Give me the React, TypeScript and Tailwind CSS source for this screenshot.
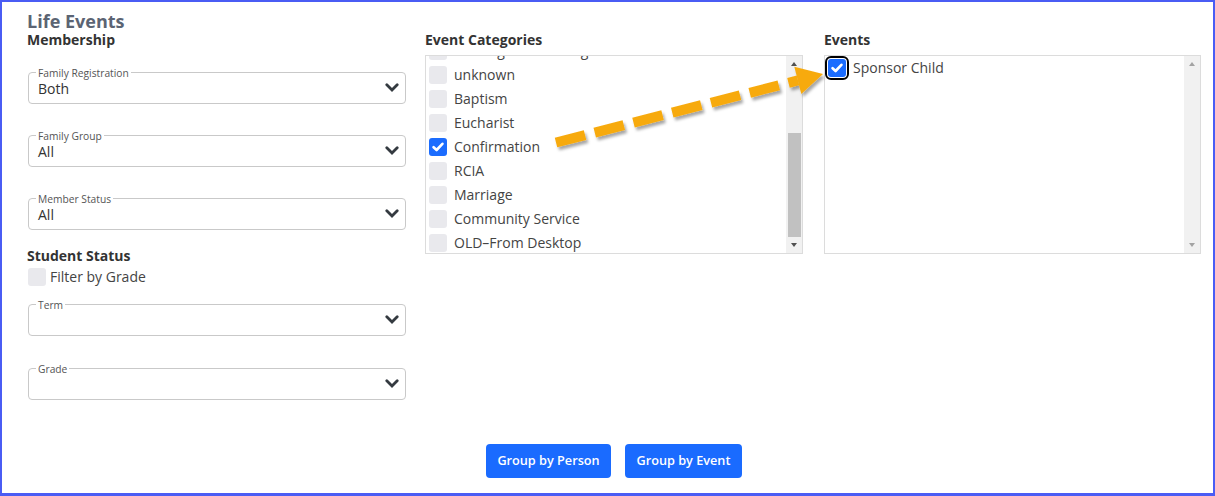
import React from "react";

function Chevron() {
  return (
    <svg width="14" height="9" viewBox="0 0 14 9" className="-mt-[3px] shrink-0">
      <polyline points="1.8,1.8 7,7 12.2,1.8" fill="none" stroke="#343a40" strokeWidth="2.8" strokeLinecap="round" strokeLinejoin="miter" />
    </svg>
  );
}

function Select({ label, value, className }: { label: string; value?: string; className: string }) {
  return (
    <fieldset className={`ml-[1px] rounded-[4px] border border-[#c9c9c9] pb-[4px] pl-[7px] pr-[6px] ${className}`}>
      <legend className="px-[2px] pt-[2px] text-[10.25px] leading-[12px] text-[#555]">{label}</legend>
      <div className="flex h-[20px] items-center">
        <span className="flex-1 pl-[2px] text-[14px] leading-[20px] text-[#333]">{value}</span>
        <Chevron />
      </div>
    </fieldset>
  );
}

function Check() {
  return (
    <svg width="12" height="10" viewBox="0 0 12 10">
      <polyline points="1.6,5.2 4.6,8 10.4,1.8" fill="none" stroke="#fff" strokeWidth="2.6" strokeLinecap="round" strokeLinejoin="round" />
    </svg>
  );
}

function Box({ checked, focus }: { checked?: boolean; focus?: boolean }) {
  if (checked && focus) {
    return (
      <span className="flex h-[18px] w-[18px] shrink-0 items-center justify-center rounded-[3px] bg-[#1b6cfe] outline-2 outline-offset-1 outline-black">
        <Check />
      </span>
    );
  }
  if (checked) {
    return (
      <span className="flex h-[18px] w-[18px] shrink-0 items-center justify-center rounded-[3px] bg-[#1b6cfe]">
        <Check />
      </span>
    );
  }
  return <span className="block h-[18px] w-[18px] shrink-0 rounded-[3px] bg-[#e9e9ed]" />;
}

function Row({ label, checked, focus }: { label: string; checked?: boolean; focus?: boolean }) {
  return (
    <div className="flex h-[24px] items-center gap-[7px] pl-[3px]">
      <Box checked={checked} focus={focus} />
      <span className="whitespace-nowrap text-[14px] leading-[24px] text-[#444]">{label}</span>
    </div>
  );
}

function Arrow({ color }: { color: string }) {
  return <span className="block h-0 w-0 border-x-[3.5px] border-b-[4px] border-x-transparent" style={{ borderBottomColor: color }} />;
}

function ArrowDown({ color }: { color: string }) {
  return <span className="block h-0 w-0 border-x-[3.5px] border-t-[4px] border-x-transparent" style={{ borderTopColor: color }} />;
}

function Scrollbar({ thumb }: { thumb: boolean }) {
  const c = thumb ? "#505050" : "#a3a3a3";
  return (
    <div className="flex w-[16px] shrink-0 flex-col bg-[#f1f1f1]">
      <div className="flex h-[16px] items-center justify-center">
        <Arrow color={c} />
      </div>
      <div className="flex flex-1 flex-col justify-end">
        {thumb && <div className="ml-[2px] h-[104px] w-[13px] bg-[#c1c1c1]" />}
      </div>
      <div className="flex h-[16px] items-center justify-center">
        <ArrowDown color={c} />
      </div>
    </div>
  );
}

export default function App() {
  const cats = ["unknown", "Baptism", "Eucharist", "Confirmation", "RCIA", "Marriage", "Community Service", "OLD–From Desktop"];
  return (
    <div className="relative box-border h-[496px] w-[1215px] overflow-hidden border-2 border-b-[3px] border-[#4a5cf4] bg-white font-['Open_Sans',sans-serif] text-[#333]">
      <div className="pl-[25px] pt-[11px]">
        <div className="h-[17px] text-[18px] font-bold leading-[17px] text-[#5b6473]">Life Events</div>
        <div className="mt-[2px] flex">
          <div className="flex w-[379px] flex-col">
            <div className="text-[14px] font-bold leading-[16px] text-[#333]">Membership</div>
            <Select label="Family Registration" value="Both" className="mt-[17px]" />
            <Select label="Family Group" value="All" className="mt-[24px]" />
            <Select label="Member Status" value="All" className="mt-[24px]" />
            <div className="mt-[18px] text-[14px] font-bold leading-[16px] text-[#333]">Student Status</div>
            <div className="mt-[4px] flex h-[18px] items-center gap-[4px] pl-[1px]">
              <Box />
              <span className="text-[14px] leading-[18px] text-[#444]">Filter by Grade</span>
            </div>
            <Select label="Term" className="mt-[11px]" />
            <Select label="Grade" className="mt-[25px]" />
          </div>
          <div className="ml-[19px] flex w-[378px] flex-col">
            <div className="text-[14px] font-bold leading-[16px] text-[#333]">Event Categories</div>
            <div className="mt-[7px] flex h-[199px] border border-[#dcdcdc]">
              <div className="flex-1 overflow-hidden">
                <div className="-mt-[17px]">
                  <Row label="Marriage Counseling" />
                  {cats.map((c) => (
                    <Row key={c} label={c} checked={c === "Confirmation"} />
                  ))}
                </div>
              </div>
              <Scrollbar thumb />
            </div>
          </div>
          <div className="ml-[21px] flex w-[377px] flex-col">
            <div className="text-[14px] font-bold leading-[16px] text-[#333]">Events</div>
            <div className="mt-[7px] flex h-[199px] border border-[#dcdcdc]">
              <div className="flex-1 overflow-hidden">
                <Row label="Sponsor Child" checked focus />
              </div>
              <Scrollbar thumb={false} />
            </div>
          </div>
        </div>
        <div className="mt-[44px] flex w-[1174px] justify-center gap-[14px]">
          <button className="h-[34px] w-[125px] rounded-[4px] bg-[#1a6bff] text-[12.7px] font-semibold text-white">Group by Person</button>
          <button className="h-[34px] w-[117px] rounded-[4px] bg-[#1a6bff] text-[12.7px] font-semibold text-white">Group by Event</button>
        </div>
      </div>
      <svg className="pointer-events-none absolute left-[-2px] top-[-2px]" width="1215" height="496" viewBox="0 0 1215 496">
        <defs>
          <filter id="sh" x="-10%" y="-50%" width="130%" height="200%">
            <feDropShadow dx="2" dy="3" stdDeviation="1.8" floodColor="#000" floodOpacity="0.35" />
          </filter>
        </defs>
        <g filter="url(#sh)" fill="#f7aa0f" stroke="#f7aa0f">
          <line x1="556" y1="142.5" x2="798" y2="80.4" strokeWidth="10" strokeDasharray="30 10" />
          <polygon points="823,74 794.3,66.8 801.3,94" strokeWidth="0" />
        </g>
      </svg>
    </div>
  );
}
